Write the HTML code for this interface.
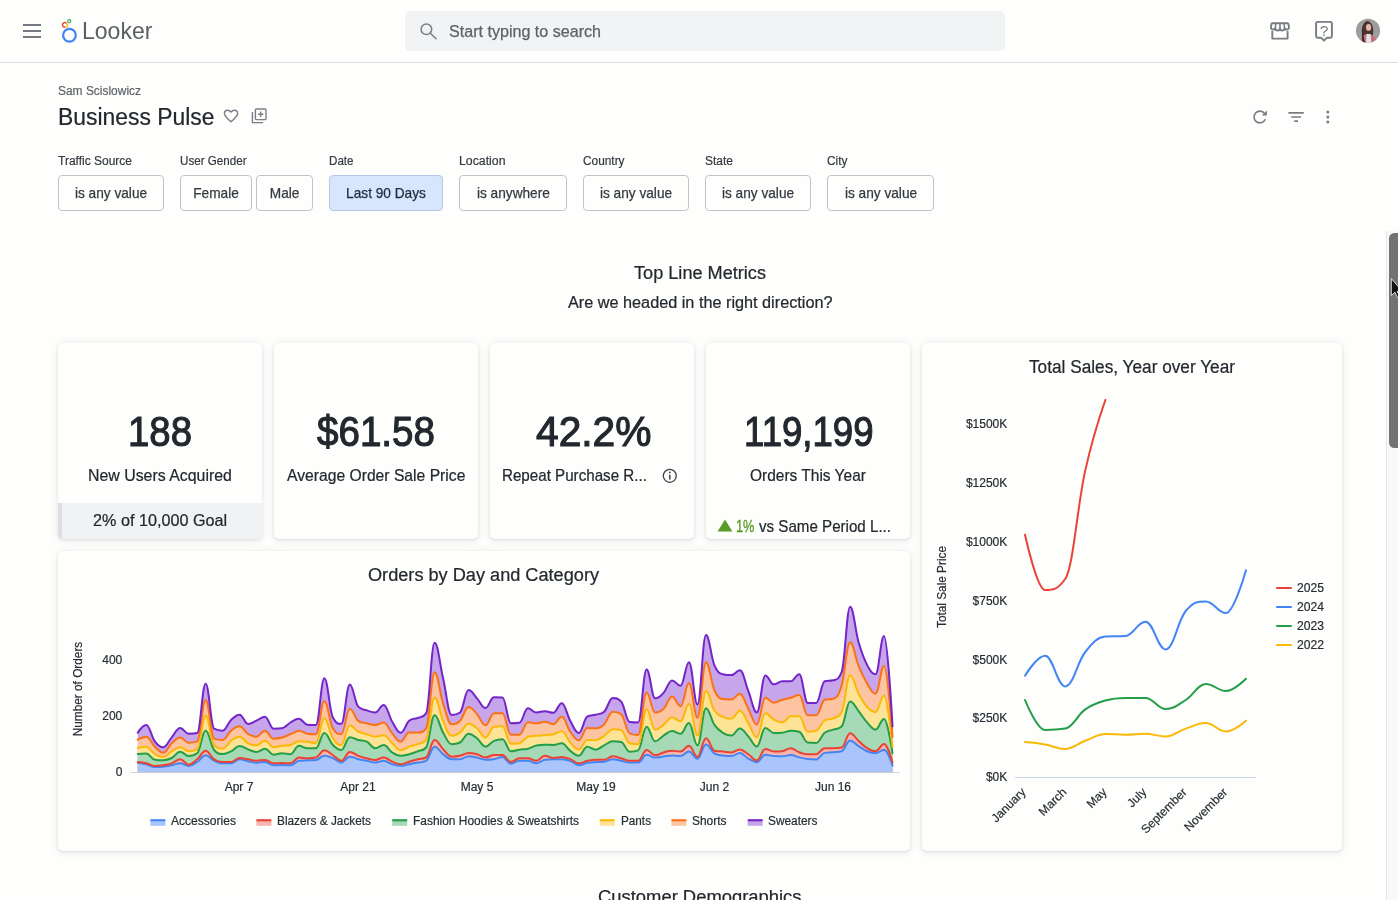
<!DOCTYPE html>
<html lang="en">
<head>
<meta charset="utf-8">
<title>Business Pulse - Looker</title>
<style>
*{box-sizing:border-box;margin:0;padding:0}
html,body{width:1398px;height:900px;overflow:hidden;background:#fefefd;font-family:"Liberation Sans",Arial,sans-serif;color:#262d33}
#page{position:relative;width:1398px;height:900px;overflow:hidden;will-change:transform}
.t{position:absolute;white-space:nowrap;transform-origin:0 50%;display:block}
.abs{position:absolute}
header{position:absolute;left:0;top:0;width:1398px;height:63px;border-bottom:1px solid #dadde1;background:#fefefd}
.search{position:absolute;left:405px;top:11px;width:600px;height:40px;background:#f1f3f4;border-radius:5px}
.fb{position:absolute;top:175px;height:36px;border:1px solid #bfc4ca;border-radius:4px;font-size:14.4px;line-height:34px;text-align:center;color:#343a40;-webkit-text-stroke:0.25px #343a40;background:#fefefd;white-space:nowrap}
.fb span{display:inline-block;transform:scaleX(.95)}
.fb.act{background:#d7e5fd;border-color:#b3c7ea;color:#1f2a3c;-webkit-text-stroke:0.25px #1f2a3c}
.card{position:absolute;background:#fefefd;border-radius:5px;box-shadow:0 1px 3px rgba(60,64,67,.13),0 1px 10px rgba(60,64,67,.10)}
svg{position:absolute;left:0;top:0;overflow:visible}
</style>
</head>
<body>
<div id="page">

<header>
  <!-- hamburger -->
  <div class="abs" style="left:23px;top:24px;width:18px;height:2px;background:#757a80"></div>
  <div class="abs" style="left:23px;top:30px;width:18px;height:2px;background:#757a80"></div>
  <div class="abs" style="left:23px;top:36px;width:18px;height:2px;background:#757a80"></div>
  <div class="search"></div>
</header>

<!-- cards -->
<div class="card" style="left:58px;top:343px;width:204px;height:196px;overflow:hidden">
  <div class="abs" style="left:0;top:160px;width:204px;height:36px;background:#f1f2f4"></div>
  <div class="abs" style="left:0;top:160px;width:4px;height:36px;background:#dcdfe4"></div>
</div>
<div class="card" style="left:274px;top:343px;width:204px;height:196px"></div>
<div class="card" style="left:490px;top:343px;width:204px;height:196px"></div>
<div class="card" style="left:706px;top:343px;width:204px;height:196px"></div>
<div class="card" style="left:58px;top:551px;width:852px;height:300px"></div>
<div class="card" style="left:922px;top:343px;width:420px;height:508px"></div>

<!-- filter buttons -->
<div class="fb" style="left:58px;width:106px"><span>is any value</span></div>
<div class="fb" style="left:180px;width:72px"><span>Female</span></div>
<div class="fb" style="left:256px;width:57px"><span>Male</span></div>
<div class="fb act" style="left:329px;width:114px"><span>Last 90 Days</span></div>
<div class="fb" style="left:459px;width:108px"><span>is anywhere</span></div>
<div class="fb" style="left:583px;width:106px"><span>is any value</span></div>
<div class="fb" style="left:705px;width:106px"><span>is any value</span></div>
<div class="fb" style="left:827px;width:107px"><span>is any value</span></div>

<!-- all icons & charts -->
<svg width="1398" height="900" viewBox="0 0 1398 900">
  <!-- looker logo mark -->
  <g fill="none">
    <circle cx="69.45" cy="35.3" r="6.35" stroke="#4285f4" stroke-width="2.25"/>
    <path d="M66.43 23.22 A2.3 2.3 0 1 0 65.40 27.07" stroke="#ea4335" stroke-width="1.5"/>
    <path d="M66.73 23.02 C67.9 24.6 67.6 26.0 66.80 27.97" stroke="#fbbc04" stroke-width="1.5"/>
    <circle cx="69.3" cy="21.2" r="1.55" stroke="#34a853" stroke-width="1.1"/>
  </g>
  <!-- search icon -->
  <g fill="none" stroke="#7b8086" stroke-width="1.55">
    <circle cx="426.4" cy="29.2" r="5.3"/>
    <path d="M430.4 33.2 L436 38.8" stroke-linecap="round"/>
  </g>
  <!-- marketplace icon -->
  <g fill="none" stroke="#787d83" stroke-width="1.9" stroke-linejoin="round">
    <path d="M1272.3 31 V38.6 H1287.6 V31"/>
    <path d="M1272.6 23.2 H1287.3 Q1288.3 23.2 1288.5 24.2 L1289 27.6 A2.3 2.3 0 0 1 1284.6 28.2 A2.3 2.3 0 0 1 1279.95 28.2 A2.3 2.3 0 0 1 1275.3 28.2 A2.3 2.3 0 0 1 1270.9 27.6 L1271.4 24.2 Q1271.6 23.2 1272.6 23.2 Z"/>
    <path d="M1275.9 23.4 L1275.3 28.2 M1279.95 23.4 V28.2 M1284 23.4 L1284.6 28.2" stroke-width="1.5"/>
  </g>
  <!-- help icon -->
  <g fill="none" stroke="#787d83" stroke-width="1.9" stroke-linejoin="round">
    <path d="M1317.6 21.9 H1330.4 Q1331.9 21.9 1331.9 23.4 V36.3 Q1331.9 37.8 1330.4 37.8 H1326.8 L1324 40.6 L1321.2 37.8 H1317.6 Q1316.1 37.8 1316.1 36.3 V23.4 Q1316.1 21.9 1317.6 21.9 Z"/>
  </g>
  <text x="1324" y="35.7" font-family="Liberation Sans, Arial, sans-serif" font-size="15.5" fill="#787d83" text-anchor="middle">?</text>
  <!-- avatar -->
  <defs><clipPath id="av"><circle cx="1368" cy="30.8" r="12.1"/></clipPath></defs>
  <g clip-path="url(#av)">
    <rect x="1355" y="18" width="26" height="26" fill="#9c9e9d"/>
    <ellipse cx="1367.5" cy="31" rx="5.8" ry="10" fill="#4a3330"/>
    <ellipse cx="1368.6" cy="27.4" rx="2.6" ry="3.4" fill="#e7b9a6"/>
    <path d="M1361 44 C1361 36 1364 34 1368 34 C1372 34 1376 36 1377 44 Z" fill="#c96f73"/>
    <path d="M1366.5 34 L1370.5 34 L1371.5 44 L1366 44 Z" fill="#dfe3ea"/>
    <path d="M1363.5 27 C1363 35 1364 40 1365.4 43 L1362.5 43 C1361.5 37 1361.8 31 1363.5 27 Z" fill="#3b2826"/>
  </g>
  <!-- heart -->
  <path d="M231 121.8 C226.2 117.6 224.4 115.7 224.4 113.4 C224.4 111.5 225.9 110.2 227.6 110.2 C228.9 110.2 230.2 110.9 231 112.1 C231.8 110.9 233.1 110.2 234.4 110.2 C236.1 110.2 237.6 111.5 237.6 113.4 C237.6 115.7 235.8 117.6 231 121.8 Z" fill="none" stroke="#7a7f85" stroke-width="1.4" stroke-linejoin="round"/>
  <!-- add to board -->
  <g fill="none" stroke="#7a7f85" stroke-width="1.4">
    <rect x="255.4" y="109" width="10.6" height="10.6" rx="1"/>
    <path d="M252.4 112 V122.6 H263"/>
    <path d="M260.7 111.6 V117 M258 114.3 H263.4"/>
  </g>
  <!-- refresh -->
  <g fill="none" stroke="#787d83" stroke-width="1.6">
    <path d="M1264.51 113.40 A5.85 5.85 0 1 0 1265.32 119.19"/>
  </g>
  <path d="M1266.9 110.5 V115.5 H1261.9 Z" fill="#787d83"/>
  <!-- filter -->
  <g stroke="#787d83" stroke-width="1.6">
    <path d="M1288.4 112.9 H1303.8 M1291.2 117 H1301 M1294.2 121.1 H1298"/>
  </g>
  <!-- kebab -->
  <g fill="#787d83">
    <circle cx="1327.8" cy="111.9" r="1.5"/><circle cx="1327.8" cy="117" r="1.5"/><circle cx="1327.8" cy="122.1" r="1.5"/>
  </g>
  <!-- info icon -->
  <g fill="none" stroke="#3c4043" stroke-width="1.3">
    <circle cx="669.8" cy="475.8" r="6.5"/>
    <path d="M669.8 474.8 V479.4" stroke-width="1.5"/>
  </g>
  <circle cx="669.8" cy="472.4" r="0.95" fill="#3c4043"/>
  <!-- up triangle -->
  <path d="M725 519.6 L732.4 531.4 H717.6 Z" fill="#5a9a27"/>

  <!-- area chart -->
  <path d="M130 772.5 H900" stroke="#ccd6eb" stroke-width="1"/>
  <path d="M137.80 732.67 C137.80 732.67 142.89 725.07 146.28 725.07 C149.67 725.07 151.37 736.88 154.76 741.33 C158.15 745.79 159.85 747.33 163.24 747.33 C166.63 747.33 168.33 741.20 171.72 737.33 C175.11 733.47 176.81 728.00 180.20 728.00 C183.59 728.00 185.29 733.73 188.68 733.73 C192.07 733.73 193.77 733.73 197.16 733.07 C200.55 732.40 202.25 683.73 205.64 683.73 C209.03 683.73 210.73 726.67 214.12 728.67 C217.51 730.67 219.21 730.67 222.60 730.67 C225.99 730.67 227.69 723.20 231.08 720.00 C234.47 716.80 236.17 714.67 239.56 714.67 C242.95 714.67 244.65 724.00 248.04 724.00 C251.43 724.00 253.13 722.13 256.52 720.67 C259.91 719.20 261.61 716.67 265.00 716.67 C268.39 716.67 270.09 728.67 273.48 728.67 C276.87 728.67 278.57 728.67 281.96 728.33 C285.35 728.00 287.05 724.40 290.44 722.50 C293.83 720.60 295.53 718.83 298.92 718.83 C302.31 718.83 304.01 724.33 307.40 724.67 C310.79 725.00 312.49 725.00 315.88 725.00 C319.27 725.00 320.97 678.33 324.36 678.33 C327.75 678.33 329.45 711.17 332.84 717.50 C336.23 723.83 337.93 723.83 341.32 723.83 C344.71 723.83 346.41 684.50 349.80 684.50 C353.19 684.50 354.89 703.00 358.28 706.67 C361.67 710.33 363.37 709.17 366.76 710.33 C370.15 711.50 371.85 712.50 375.24 712.50 C378.63 712.50 380.33 705.00 383.72 705.00 C387.11 705.00 388.81 716.10 392.20 721.67 C395.59 727.23 397.29 732.83 400.68 732.83 C404.07 732.83 405.77 723.67 409.16 720.83 C412.55 718.00 414.25 719.50 417.64 718.00 C421.03 716.50 422.73 718.00 426.12 713.33 C429.51 708.67 431.21 642.83 434.60 642.83 C437.99 642.83 439.69 663.90 443.08 678.33 C446.47 692.77 448.17 715.00 451.56 715.00 C454.95 715.00 456.65 715.00 460.04 712.50 C463.43 710.00 465.13 690.00 468.52 690.00 C471.91 690.00 473.61 694.73 477.00 698.33 C480.39 701.93 482.09 708.00 485.48 708.00 C488.87 708.00 490.57 697.17 493.96 697.17 C497.35 697.17 499.05 697.17 502.44 697.50 C505.83 697.83 507.53 723.33 510.92 723.33 C514.31 723.33 516.01 723.33 519.40 722.83 C522.79 722.33 524.49 708.33 527.88 708.33 C531.27 708.33 532.97 712.50 536.36 712.50 C539.75 712.50 541.45 711.17 544.84 711.17 C548.23 711.17 549.93 712.83 553.32 712.83 C556.71 712.83 558.41 703.33 561.80 703.33 C565.19 703.33 566.89 714.90 570.28 720.83 C573.67 726.77 575.37 733.00 578.76 733.00 C582.15 733.00 583.85 718.67 587.24 716.67 C590.63 714.67 592.33 715.67 595.72 714.67 C599.11 713.67 600.81 714.67 604.20 711.67 C607.59 708.67 609.29 698.00 612.68 698.00 C616.07 698.00 617.77 698.00 621.16 701.67 C624.55 705.33 626.25 721.50 629.64 722.00 C633.03 722.50 634.73 722.50 638.12 722.50 C641.51 722.50 643.21 669.50 646.60 669.50 C649.99 669.50 651.69 698.33 655.08 698.33 C658.47 698.33 660.17 696.47 663.56 692.89 C666.95 689.31 668.65 680.44 672.04 680.44 C675.43 680.44 677.13 685.78 680.52 685.78 C683.91 685.78 685.61 662.13 689.00 662.13 C692.39 662.13 694.09 704.44 697.48 704.44 C700.87 704.44 702.57 635.11 705.96 635.11 C709.35 635.11 711.05 657.51 714.44 665.33 C717.83 673.16 719.53 673.33 722.92 674.22 C726.31 675.11 728.01 675.11 731.40 675.11 C734.79 675.11 736.49 670.31 739.88 670.31 C743.27 670.31 744.97 682.68 748.36 691.11 C751.75 699.54 753.45 712.44 756.84 712.44 C760.23 712.44 761.93 675.47 765.32 675.47 C768.71 675.47 770.41 684.36 773.80 684.36 C777.19 684.36 778.89 681.33 782.28 681.33 C785.67 681.33 787.37 681.33 790.76 681.33 C794.15 681.33 795.85 674.14 799.24 674.14 C802.63 674.14 804.33 702.92 807.72 702.92 C811.11 702.92 812.81 702.92 816.20 702.92 C819.59 702.92 821.29 682.36 824.68 681.33 C828.07 680.31 829.77 681.33 833.16 680.31 C836.55 679.28 838.25 680.31 841.64 672.08 C845.03 663.86 846.73 606.72 850.12 606.72 C853.51 606.72 855.21 630.64 858.60 642.28 C861.99 653.91 863.69 658.52 867.08 664.89 C870.47 671.26 872.17 674.14 875.56 674.14 C878.95 674.14 880.65 636.11 884.04 636.11 C887.43 636.11 892.52 726.56 892.52 726.56 L892.52 772.3 L137.80 772.3 Z" fill="#c6a5eb"/>
<path d="M137.80 739.73 C137.80 739.73 142.89 736.67 146.28 736.67 C149.67 736.67 151.37 743.47 154.76 746.67 C158.15 749.87 159.85 752.67 163.24 752.67 C166.63 752.67 168.33 746.35 171.72 743.33 C175.11 740.32 176.81 737.60 180.20 737.60 C183.59 737.60 185.29 742.67 188.68 742.67 C192.07 742.67 193.77 742.67 197.16 741.33 C200.55 740.00 202.25 700.00 205.64 700.00 C209.03 700.00 210.73 737.33 214.12 738.67 C217.51 740.00 219.21 740.00 222.60 740.00 C225.99 740.00 227.69 733.41 231.08 730.67 C234.47 727.92 236.17 726.27 239.56 726.27 C242.95 726.27 244.65 731.92 248.04 734.00 C251.43 736.08 253.13 736.67 256.52 736.67 C259.91 736.67 261.61 730.67 265.00 730.67 C268.39 730.67 270.09 738.67 273.48 738.67 C276.87 738.67 278.57 738.40 281.96 737.50 C285.35 736.60 287.05 735.50 290.44 734.17 C293.83 732.83 295.53 730.83 298.92 730.83 C302.31 730.83 304.01 733.17 307.40 733.67 C310.79 734.17 312.49 734.17 315.88 734.17 C319.27 734.17 320.97 701.33 324.36 701.33 C327.75 701.33 329.45 722.50 332.84 728.33 C336.23 734.17 337.93 734.17 341.32 734.17 C344.71 734.17 346.41 708.67 349.80 708.67 C353.19 708.67 354.89 718.33 358.28 720.83 C361.67 723.33 363.37 722.50 366.76 723.33 C370.15 724.17 371.85 725.00 375.24 725.00 C378.63 725.00 380.33 722.50 383.72 722.50 C387.11 722.50 388.81 729.50 392.20 733.33 C395.59 737.17 397.29 741.67 400.68 741.67 C404.07 741.67 405.77 732.50 409.16 732.50 C412.55 732.50 414.25 732.50 417.64 732.50 C421.03 732.50 422.73 732.50 426.12 728.33 C429.51 724.17 431.21 672.50 434.60 672.50 C437.99 672.50 439.69 693.00 443.08 703.33 C446.47 713.67 448.17 724.17 451.56 724.17 C454.95 724.17 456.65 724.17 460.04 720.83 C463.43 717.50 465.13 707.00 468.52 707.00 C471.91 707.00 473.61 710.50 477.00 714.17 C480.39 717.83 482.09 725.33 485.48 725.33 C488.87 725.33 490.57 713.33 493.96 713.33 C497.35 713.33 499.05 713.33 502.44 713.33 C505.83 713.33 507.53 734.67 510.92 734.67 C514.31 734.67 516.01 734.67 519.40 734.67 C522.79 734.67 524.49 722.17 527.88 722.17 C531.27 722.17 532.97 723.33 536.36 723.33 C539.75 723.33 541.45 721.67 544.84 721.67 C548.23 721.67 549.93 724.17 553.32 724.17 C556.71 724.17 558.41 716.67 561.80 716.67 C565.19 716.67 566.89 726.93 570.28 731.67 C573.67 736.40 575.37 740.33 578.76 740.33 C582.15 740.33 583.85 728.00 587.24 728.00 C590.63 728.00 592.33 728.33 595.72 728.33 C599.11 728.33 600.81 727.50 604.20 724.17 C607.59 720.83 609.29 711.67 612.68 711.67 C616.07 711.67 617.77 711.67 621.16 714.17 C624.55 716.67 626.25 731.67 629.64 733.33 C633.03 735.00 634.73 735.00 638.12 735.00 C641.51 735.00 643.21 692.50 646.60 692.50 C649.99 692.50 651.69 712.50 655.08 712.50 C658.47 712.50 660.17 712.10 663.56 708.89 C666.95 705.68 668.65 696.44 672.04 696.44 C675.43 696.44 677.13 706.22 680.52 706.22 C683.91 706.22 685.61 683.11 689.00 683.11 C692.39 683.11 694.09 717.78 697.48 717.78 C700.87 717.78 702.57 662.13 705.96 662.13 C709.35 662.13 711.05 682.83 714.44 690.22 C717.83 697.62 719.53 698.76 722.92 699.11 C726.31 699.47 728.01 699.47 731.40 699.47 C734.79 699.47 736.49 693.78 739.88 693.78 C743.27 693.78 744.97 702.74 748.36 708.89 C751.75 715.04 753.45 724.53 756.84 724.53 C760.23 724.53 761.93 697.69 765.32 697.69 C768.71 697.69 770.41 702.67 773.80 702.67 C777.19 702.67 778.89 700.81 782.28 699.83 C785.67 698.86 787.37 698.72 790.76 697.78 C794.15 696.83 795.85 695.11 799.24 695.11 C802.63 695.11 804.33 715.25 807.72 715.25 C811.11 715.25 812.81 715.25 816.20 715.25 C819.59 715.25 821.29 700.86 824.68 699.83 C828.07 698.81 829.77 699.83 833.16 698.81 C836.55 697.78 838.25 696.75 841.64 685.44 C845.03 674.14 846.73 642.28 850.12 642.28 C853.51 642.28 855.21 657.69 858.60 665.92 C861.99 674.14 863.69 677.84 867.08 683.39 C870.47 688.94 872.17 693.67 875.56 693.67 C878.95 693.67 880.65 665.92 884.04 665.92 C887.43 665.92 892.52 736.83 892.52 736.83 L892.52 772.3 L137.80 772.3 Z" fill="#fdc4a2"/>
<path d="M137.80 748.00 C137.80 748.00 142.89 746.67 146.28 746.67 C149.67 746.67 151.37 751.92 154.76 754.00 C158.15 756.08 159.85 757.07 163.24 757.07 C166.63 757.07 168.33 753.28 171.72 751.33 C175.11 749.39 176.81 747.33 180.20 747.33 C183.59 747.33 185.29 751.33 188.68 751.33 C192.07 751.33 193.77 751.33 197.16 749.07 C200.55 746.80 202.25 715.73 205.64 715.73 C209.03 715.73 210.73 742.00 214.12 745.33 C217.51 748.67 219.21 748.67 222.60 748.67 C225.99 748.67 227.69 743.07 231.08 740.67 C234.47 738.27 236.17 736.67 239.56 736.67 C242.95 736.67 244.65 741.60 248.04 743.33 C251.43 745.07 253.13 745.33 256.52 745.33 C259.91 745.33 261.61 740.67 265.00 740.67 C268.39 740.67 270.09 747.33 273.48 747.33 C276.87 747.33 278.57 746.30 281.96 745.83 C285.35 745.37 287.05 745.83 290.44 745.00 C293.83 744.17 295.53 741.33 298.92 741.33 C302.31 741.33 304.01 741.33 307.40 741.67 C310.79 742.00 312.49 743.33 315.88 743.33 C319.27 743.33 320.97 718.33 324.36 718.33 C327.75 718.33 329.45 733.00 332.84 738.33 C336.23 743.67 337.93 745.00 341.32 745.00 C344.71 745.00 346.41 725.50 349.80 725.50 C353.19 725.50 354.89 729.93 358.28 731.67 C361.67 733.40 363.37 733.17 366.76 734.17 C370.15 735.17 371.85 736.67 375.24 736.67 C378.63 736.67 380.33 735.33 383.72 735.33 C387.11 735.33 388.81 740.33 392.20 743.33 C395.59 746.33 397.29 750.33 400.68 750.33 C404.07 750.33 405.77 747.90 409.16 746.67 C412.55 745.43 414.25 745.50 417.64 744.17 C421.03 742.83 422.73 744.17 426.12 740.00 C429.51 735.83 431.21 697.50 434.60 697.50 C437.99 697.50 439.69 713.17 443.08 720.83 C446.47 728.50 448.17 735.83 451.56 735.83 C454.95 735.83 456.65 734.90 460.04 732.50 C463.43 730.10 465.13 723.83 468.52 723.83 C471.91 723.83 473.61 725.60 477.00 728.33 C480.39 731.07 482.09 737.50 485.48 737.50 C488.87 737.50 490.57 727.00 493.96 726.67 C497.35 726.33 499.05 726.33 502.44 726.33 C505.83 726.33 507.53 743.83 510.92 743.83 C514.31 743.83 516.01 743.83 519.40 743.33 C522.79 742.83 524.49 737.50 527.88 736.67 C531.27 735.83 532.97 736.17 536.36 735.83 C539.75 735.50 541.45 735.33 544.84 735.00 C548.23 734.67 549.93 734.90 553.32 734.17 C556.71 733.43 558.41 731.33 561.80 731.33 C565.19 731.33 566.89 738.83 570.28 742.50 C573.67 746.17 575.37 749.67 578.76 749.67 C582.15 749.67 583.85 740.00 587.24 740.00 C590.63 740.00 592.33 740.00 595.72 740.00 C599.11 740.00 600.81 738.00 604.20 735.83 C607.59 733.67 609.29 729.17 612.68 729.17 C616.07 729.17 617.77 729.17 621.16 730.00 C624.55 730.83 626.25 742.50 629.64 743.33 C633.03 744.17 634.73 744.17 638.12 744.17 C641.51 744.17 643.21 709.17 646.60 709.17 C649.99 709.17 651.69 729.67 655.08 729.67 C658.47 729.67 660.17 727.34 663.56 724.89 C666.95 722.44 668.65 717.42 672.04 717.42 C675.43 717.42 677.13 721.33 680.52 721.33 C683.91 721.33 685.61 703.91 689.00 703.91 C692.39 703.91 694.09 735.56 697.48 735.56 C700.87 735.56 702.57 691.11 705.96 691.11 C709.35 691.11 711.05 705.51 714.44 710.67 C717.83 715.82 719.53 715.29 722.92 716.89 C726.31 718.49 728.01 718.67 731.40 718.67 C734.79 718.67 736.49 710.67 739.88 710.67 C743.27 710.67 744.97 717.78 748.36 723.11 C751.75 728.44 753.45 737.33 756.84 737.33 C760.23 737.33 761.93 713.33 765.32 713.33 C768.71 713.33 770.41 717.73 773.80 719.56 C777.19 721.38 778.89 722.44 782.28 722.44 C785.67 722.44 787.37 716.28 790.76 716.28 C794.15 716.28 795.85 716.28 799.24 716.28 C802.63 716.28 804.33 731.69 807.72 731.69 C811.11 731.69 812.81 731.69 816.20 730.67 C819.59 729.64 821.29 722.44 824.68 720.39 C828.07 718.33 829.77 719.98 833.16 718.33 C836.55 716.69 838.25 718.33 841.64 712.17 C845.03 706.00 846.73 675.17 850.12 675.17 C853.51 675.17 855.21 687.29 858.60 693.67 C861.99 700.04 863.69 703.33 867.08 707.03 C870.47 710.73 872.17 712.17 875.56 712.17 C878.95 712.17 880.65 695.72 884.04 695.72 C887.43 695.72 892.52 747.11 892.52 747.11 L892.52 772.3 L137.80 772.3 Z" fill="#fde396"/>
<path d="M137.80 754.00 C137.80 754.00 142.89 753.60 146.28 753.60 C149.67 753.60 151.37 759.20 154.76 759.73 C158.15 760.27 159.85 760.27 163.24 760.27 C166.63 760.27 168.33 759.71 171.72 758.00 C175.11 756.29 176.81 751.73 180.20 751.73 C183.59 751.73 185.29 756.00 188.68 756.00 C192.07 756.00 193.77 756.00 197.16 753.33 C200.55 750.67 202.25 730.40 205.64 730.40 C209.03 730.40 210.73 746.00 214.12 750.00 C217.51 754.00 219.21 754.00 222.60 754.00 C225.99 754.00 227.69 752.93 231.08 751.33 C234.47 749.73 236.17 746.00 239.56 746.00 C242.95 746.00 244.65 748.13 248.04 749.33 C251.43 750.53 253.13 752.00 256.52 752.00 C259.91 752.00 261.61 748.67 265.00 748.67 C268.39 748.67 270.09 754.67 273.48 754.67 C276.87 754.67 278.57 753.33 281.96 753.33 C285.35 753.33 287.05 754.17 290.44 754.17 C293.83 754.17 295.53 745.83 298.92 745.83 C302.31 745.83 304.01 748.33 307.40 748.33 C310.79 748.33 312.49 748.33 315.88 748.33 C319.27 748.33 320.97 733.00 324.36 733.00 C327.75 733.00 329.45 741.60 332.84 745.00 C336.23 748.40 337.93 750.00 341.32 750.00 C344.71 750.00 346.41 737.17 349.80 737.17 C353.19 737.17 354.89 739.10 358.28 740.00 C361.67 740.90 363.37 740.00 366.76 741.67 C370.15 743.33 371.85 748.33 375.24 748.33 C378.63 748.33 380.33 745.00 383.72 745.00 C387.11 745.00 388.81 750.33 392.20 752.50 C395.59 754.67 397.29 755.83 400.68 755.83 C404.07 755.83 405.77 755.07 409.16 754.17 C412.55 753.27 414.25 752.67 417.64 751.33 C421.03 750.00 422.73 751.33 426.12 747.50 C429.51 743.67 431.21 715.33 434.60 715.33 C437.99 715.33 439.69 726.73 443.08 732.50 C446.47 738.27 448.17 744.17 451.56 744.17 C454.95 744.17 456.65 744.17 460.04 742.50 C463.43 740.83 465.13 733.67 468.52 733.67 C471.91 733.67 473.61 735.73 477.00 738.33 C480.39 740.93 482.09 746.67 485.48 746.67 C488.87 746.67 490.57 742.33 493.96 740.83 C497.35 739.33 499.05 739.17 502.44 739.17 C505.83 739.17 507.53 751.33 510.92 751.33 C514.31 751.33 516.01 750.20 519.40 749.67 C522.79 749.13 524.49 749.50 527.88 748.67 C531.27 747.83 532.97 746.30 536.36 745.50 C539.75 744.70 541.45 744.67 544.84 744.67 C548.23 744.67 549.93 745.00 553.32 745.00 C556.71 745.00 558.41 743.33 561.80 743.33 C565.19 743.33 566.89 748.33 570.28 750.83 C573.67 753.33 575.37 755.83 578.76 755.83 C582.15 755.83 583.85 746.67 587.24 746.67 C590.63 746.67 592.33 749.67 595.72 749.67 C599.11 749.67 600.81 747.00 604.20 745.33 C607.59 743.67 609.29 741.33 612.68 741.33 C616.07 741.33 617.77 741.33 621.16 742.00 C624.55 742.67 626.25 751.67 629.64 751.67 C633.03 751.67 634.73 751.67 638.12 750.33 C641.51 749.00 643.21 726.67 646.60 726.67 C649.99 726.67 651.69 741.33 655.08 741.33 C658.47 741.33 660.17 737.60 663.56 735.56 C666.95 733.51 668.65 731.11 672.04 731.11 C675.43 731.11 677.13 733.78 680.52 733.78 C683.91 733.78 685.61 723.11 689.00 723.11 C692.39 723.11 694.09 745.33 697.48 745.33 C700.87 745.33 702.57 708.36 705.96 708.36 C709.35 708.36 711.05 719.98 714.44 724.89 C717.83 729.80 719.53 730.76 722.92 732.89 C726.31 735.02 728.01 735.56 731.40 735.56 C734.79 735.56 736.49 728.44 739.88 728.44 C743.27 728.44 744.97 732.82 748.36 736.44 C751.75 740.07 753.45 746.58 756.84 746.58 C760.23 746.58 761.93 727.91 765.32 727.91 C768.71 727.91 770.41 732.89 773.80 732.89 C777.19 732.89 778.89 732.89 782.28 732.72 C785.67 732.56 787.37 730.67 790.76 730.67 C794.15 730.67 795.85 730.67 799.24 731.69 C802.63 732.72 804.33 742.18 807.72 742.59 C811.11 743.00 812.81 743.00 816.20 743.00 C819.59 743.00 821.29 735.39 824.68 732.72 C828.07 730.05 829.77 730.87 833.16 729.64 C836.55 728.41 838.25 729.64 841.64 726.56 C845.03 723.47 846.73 701.48 850.12 701.48 C853.51 701.48 855.21 706.95 858.60 711.14 C861.99 715.33 863.69 718.74 867.08 722.44 C870.47 726.14 872.17 729.64 875.56 729.64 C878.95 729.64 880.65 718.95 884.04 718.95 C887.43 718.95 892.52 753.28 892.52 753.28 L892.52 772.3 L137.80 772.3 Z" fill="#a6d9b5"/>
<path d="M137.80 762.00 C137.80 762.00 142.89 762.53 146.28 763.33 C149.67 764.13 151.37 766.00 154.76 766.00 C158.15 766.00 159.85 765.87 163.24 765.33 C166.63 764.80 168.33 764.53 171.72 763.33 C175.11 762.13 176.81 759.33 180.20 759.33 C183.59 759.33 185.29 764.67 188.68 764.67 C192.07 764.67 193.77 762.13 197.16 759.33 C200.55 756.53 202.25 750.67 205.64 750.67 C209.03 750.67 210.73 757.07 214.12 759.33 C217.51 761.60 219.21 762.00 222.60 762.00 C225.99 762.00 227.69 762.00 231.08 762.00 C234.47 762.00 236.17 758.00 239.56 758.00 C242.95 758.00 244.65 758.80 248.04 759.33 C251.43 759.87 253.13 760.67 256.52 760.67 C259.91 760.67 261.61 760.00 265.00 760.00 C268.39 760.00 270.09 763.33 273.48 763.33 C276.87 763.33 278.57 763.00 281.96 763.00 C285.35 763.00 287.05 763.33 290.44 763.33 C293.83 763.33 295.53 757.50 298.92 757.50 C302.31 757.50 304.01 758.33 307.40 758.33 C310.79 758.33 312.49 758.33 315.88 757.50 C319.27 756.67 320.97 750.33 324.36 750.33 C327.75 750.33 329.45 752.90 332.84 755.00 C336.23 757.10 337.93 760.83 341.32 760.83 C344.71 760.83 346.41 752.00 349.80 752.00 C353.19 752.00 354.89 754.57 358.28 755.83 C361.67 757.10 363.37 757.50 366.76 758.33 C370.15 759.17 371.85 760.00 375.24 760.00 C378.63 760.00 380.33 757.50 383.72 757.50 C387.11 757.50 388.81 760.33 392.20 761.67 C395.59 763.00 397.29 764.17 400.68 764.17 C404.07 764.17 405.77 762.67 409.16 761.67 C412.55 760.67 414.25 760.00 417.64 759.17 C421.03 758.33 422.73 759.17 426.12 757.50 C429.51 755.83 431.21 740.00 434.60 740.00 C437.99 740.00 439.69 745.83 443.08 749.17 C446.47 752.50 448.17 756.67 451.56 756.67 C454.95 756.67 456.65 756.57 460.04 755.83 C463.43 755.10 465.13 753.00 468.52 753.00 C471.91 753.00 473.61 753.27 477.00 754.17 C480.39 755.07 482.09 757.50 485.48 757.50 C488.87 757.50 490.57 755.00 493.96 755.00 C497.35 755.00 499.05 755.00 502.44 755.00 C505.83 755.00 507.53 762.00 510.92 762.00 C514.31 762.00 516.01 758.33 519.40 758.33 C522.79 758.33 524.49 758.33 527.88 758.33 C531.27 758.33 532.97 760.83 536.36 760.83 C539.75 760.83 541.45 755.83 544.84 755.83 C548.23 755.83 549.93 758.00 553.32 758.00 C556.71 758.00 558.41 757.00 561.80 757.00 C565.19 757.00 566.89 757.90 570.28 759.17 C573.67 760.43 575.37 763.33 578.76 763.33 C582.15 763.33 583.85 761.57 587.24 760.83 C590.63 760.10 592.33 759.67 595.72 759.67 C599.11 759.67 600.81 759.67 604.20 759.67 C607.59 759.67 609.29 756.33 612.68 756.33 C616.07 756.33 617.77 757.43 621.16 758.33 C624.55 759.23 626.25 760.83 629.64 760.83 C633.03 760.83 634.73 760.83 638.12 760.83 C641.51 760.83 643.21 750.00 646.60 750.00 C649.99 750.00 651.69 755.33 655.08 755.33 C658.47 755.33 660.17 753.38 663.56 752.44 C666.95 751.51 668.65 750.67 672.04 750.67 C675.43 750.67 677.13 751.56 680.52 751.56 C683.91 751.56 685.61 745.87 689.00 745.87 C692.39 745.87 694.09 756.89 697.48 756.89 C700.87 756.89 702.57 738.22 705.96 738.22 C709.35 738.22 711.05 749.78 714.44 750.67 C717.83 751.56 719.53 751.20 722.92 751.56 C726.31 751.91 728.01 752.44 731.40 752.44 C734.79 752.44 736.49 749.42 739.88 749.42 C743.27 749.42 744.97 752.02 748.36 754.22 C751.75 756.43 753.45 760.44 756.84 760.44 C760.23 760.44 761.93 748.89 765.32 748.89 C768.71 748.89 770.41 751.56 773.80 751.56 C777.19 751.56 778.89 751.56 782.28 751.22 C785.67 750.89 787.37 748.14 790.76 748.14 C794.15 748.14 795.85 751.02 799.24 752.25 C802.63 753.48 804.33 754.31 807.72 754.31 C811.11 754.31 812.81 754.31 816.20 754.31 C819.59 754.31 821.29 748.14 824.68 748.14 C828.07 748.14 829.77 748.14 833.16 748.14 C836.55 748.14 838.25 748.14 841.64 747.52 C845.03 746.91 846.73 733.13 850.12 733.13 C853.51 733.13 855.21 737.94 858.60 740.94 C861.99 743.95 863.69 746.08 867.08 748.14 C870.47 750.19 872.17 751.22 875.56 751.22 C878.95 751.22 880.65 744.03 884.04 744.03 C887.43 744.03 892.52 762.53 892.52 762.53 L892.52 772.3 L137.80 772.3 Z" fill="#f7b5ad"/>
<path d="M137.80 762.67 C137.80 762.67 142.89 763.39 146.28 764.27 C149.67 765.15 151.37 767.07 154.76 767.07 C158.15 767.07 159.85 767.01 163.24 766.67 C166.63 766.32 168.33 766.00 171.72 765.33 C175.11 764.67 176.81 763.33 180.20 763.33 C183.59 763.33 185.29 766.00 188.68 766.00 C192.07 766.00 193.77 764.13 197.16 762.00 C200.55 759.87 202.25 755.33 205.64 755.33 C209.03 755.33 210.73 759.07 214.12 760.67 C217.51 762.27 219.21 763.33 222.60 763.33 C225.99 763.33 227.69 763.33 231.08 763.33 C234.47 763.33 236.17 759.33 239.56 759.33 C242.95 759.33 244.65 760.67 248.04 761.33 C251.43 762.00 253.13 762.67 256.52 762.67 C259.91 762.67 261.61 762.00 265.00 762.00 C268.39 762.00 270.09 765.33 273.48 765.33 C276.87 765.33 278.57 765.00 281.96 765.00 C285.35 765.00 287.05 765.33 290.44 765.33 C293.83 765.33 295.53 761.33 298.92 760.83 C302.31 760.33 304.01 760.50 307.40 760.33 C310.79 760.17 312.49 760.33 315.88 760.00 C319.27 759.67 320.97 755.83 324.36 755.83 C327.75 755.83 329.45 756.67 332.84 758.00 C336.23 759.33 337.93 762.50 341.32 762.50 C344.71 762.50 346.41 756.67 349.80 756.67 C353.19 756.67 354.89 758.33 358.28 759.17 C361.67 760.00 363.37 760.17 366.76 760.83 C370.15 761.50 371.85 762.50 375.24 762.50 C378.63 762.50 380.33 760.83 383.72 760.83 C387.11 760.83 388.81 763.17 392.20 764.17 C395.59 765.17 397.29 765.83 400.68 765.83 C404.07 765.83 405.77 764.83 409.16 764.17 C412.55 763.50 414.25 763.17 417.64 762.50 C421.03 761.83 422.73 762.50 426.12 760.83 C429.51 759.17 431.21 746.67 434.60 746.67 C437.99 746.67 439.69 751.67 443.08 754.17 C446.47 756.67 448.17 759.17 451.56 759.17 C454.95 759.17 456.65 759.17 460.04 759.17 C463.43 759.17 465.13 756.33 468.52 756.33 C471.91 756.33 473.61 756.83 477.00 757.50 C480.39 758.17 482.09 759.67 485.48 759.67 C488.87 759.67 490.57 759.67 493.96 759.17 C497.35 758.67 499.05 757.00 502.44 757.00 C505.83 757.00 507.53 763.67 510.92 763.67 C514.31 763.67 516.01 760.83 519.40 760.83 C522.79 760.83 524.49 760.83 527.88 760.83 C531.27 760.83 532.97 763.33 536.36 763.33 C539.75 763.33 541.45 760.17 544.84 759.67 C548.23 759.17 549.93 759.17 553.32 759.17 C556.71 759.17 558.41 759.17 561.80 759.17 C565.19 759.17 566.89 759.60 570.28 760.83 C573.67 762.07 575.37 765.33 578.76 765.33 C582.15 765.33 583.85 763.50 587.24 762.83 C590.63 762.17 592.33 762.23 595.72 762.00 C599.11 761.77 600.81 762.00 604.20 761.67 C607.59 761.33 609.29 759.17 612.68 759.17 C616.07 759.17 617.77 760.17 621.16 760.83 C624.55 761.50 626.25 762.50 629.64 762.50 C633.03 762.50 634.73 762.50 638.12 762.50 C641.51 762.50 643.21 754.67 646.60 754.67 C649.99 754.67 651.69 757.50 655.08 757.50 C658.47 757.50 660.17 756.94 663.56 756.53 C666.95 756.13 668.65 755.47 672.04 755.47 C675.43 755.47 677.13 756.00 680.52 756.00 C683.91 756.00 685.61 751.56 689.00 751.56 C692.39 751.56 694.09 758.67 697.48 758.67 C700.87 758.67 702.57 744.44 705.96 744.44 C709.35 744.44 711.05 751.20 714.44 753.33 C717.83 755.47 719.53 754.93 722.92 755.47 C726.31 756.00 728.01 756.00 731.40 756.00 C734.79 756.00 736.49 752.98 739.88 752.98 C743.27 752.98 744.97 756.82 748.36 758.67 C751.75 760.52 753.45 762.22 756.84 762.22 C760.23 762.22 761.93 754.76 765.32 754.76 C768.71 754.76 770.41 755.68 773.80 756.00 C777.19 756.32 778.89 756.36 782.28 756.36 C785.67 756.36 787.37 754.92 790.76 754.92 C794.15 754.92 795.85 756.57 799.24 757.39 C802.63 758.21 804.33 758.62 807.72 759.03 C811.11 759.44 812.81 759.44 816.20 759.44 C819.59 759.44 821.29 753.48 824.68 752.87 C828.07 752.25 829.77 752.58 833.16 752.25 C836.55 751.92 838.25 752.25 841.64 751.22 C845.03 750.19 846.73 740.53 850.12 740.53 C853.51 740.53 855.21 743.95 858.60 746.08 C861.99 748.22 863.69 749.78 867.08 751.22 C870.47 752.66 872.17 753.28 875.56 753.28 C878.95 753.28 880.65 749.78 884.04 749.78 C887.43 749.78 892.52 765.61 892.52 765.61 L892.52 772.3 L137.80 772.3 Z" fill="#aac5fb"/>
<path d="M137.80 762.67 C137.80 762.67 142.89 763.39 146.28 764.27 C149.67 765.15 151.37 767.07 154.76 767.07 C158.15 767.07 159.85 767.01 163.24 766.67 C166.63 766.32 168.33 766.00 171.72 765.33 C175.11 764.67 176.81 763.33 180.20 763.33 C183.59 763.33 185.29 766.00 188.68 766.00 C192.07 766.00 193.77 764.13 197.16 762.00 C200.55 759.87 202.25 755.33 205.64 755.33 C209.03 755.33 210.73 759.07 214.12 760.67 C217.51 762.27 219.21 763.33 222.60 763.33 C225.99 763.33 227.69 763.33 231.08 763.33 C234.47 763.33 236.17 759.33 239.56 759.33 C242.95 759.33 244.65 760.67 248.04 761.33 C251.43 762.00 253.13 762.67 256.52 762.67 C259.91 762.67 261.61 762.00 265.00 762.00 C268.39 762.00 270.09 765.33 273.48 765.33 C276.87 765.33 278.57 765.00 281.96 765.00 C285.35 765.00 287.05 765.33 290.44 765.33 C293.83 765.33 295.53 761.33 298.92 760.83 C302.31 760.33 304.01 760.50 307.40 760.33 C310.79 760.17 312.49 760.33 315.88 760.00 C319.27 759.67 320.97 755.83 324.36 755.83 C327.75 755.83 329.45 756.67 332.84 758.00 C336.23 759.33 337.93 762.50 341.32 762.50 C344.71 762.50 346.41 756.67 349.80 756.67 C353.19 756.67 354.89 758.33 358.28 759.17 C361.67 760.00 363.37 760.17 366.76 760.83 C370.15 761.50 371.85 762.50 375.24 762.50 C378.63 762.50 380.33 760.83 383.72 760.83 C387.11 760.83 388.81 763.17 392.20 764.17 C395.59 765.17 397.29 765.83 400.68 765.83 C404.07 765.83 405.77 764.83 409.16 764.17 C412.55 763.50 414.25 763.17 417.64 762.50 C421.03 761.83 422.73 762.50 426.12 760.83 C429.51 759.17 431.21 746.67 434.60 746.67 C437.99 746.67 439.69 751.67 443.08 754.17 C446.47 756.67 448.17 759.17 451.56 759.17 C454.95 759.17 456.65 759.17 460.04 759.17 C463.43 759.17 465.13 756.33 468.52 756.33 C471.91 756.33 473.61 756.83 477.00 757.50 C480.39 758.17 482.09 759.67 485.48 759.67 C488.87 759.67 490.57 759.67 493.96 759.17 C497.35 758.67 499.05 757.00 502.44 757.00 C505.83 757.00 507.53 763.67 510.92 763.67 C514.31 763.67 516.01 760.83 519.40 760.83 C522.79 760.83 524.49 760.83 527.88 760.83 C531.27 760.83 532.97 763.33 536.36 763.33 C539.75 763.33 541.45 760.17 544.84 759.67 C548.23 759.17 549.93 759.17 553.32 759.17 C556.71 759.17 558.41 759.17 561.80 759.17 C565.19 759.17 566.89 759.60 570.28 760.83 C573.67 762.07 575.37 765.33 578.76 765.33 C582.15 765.33 583.85 763.50 587.24 762.83 C590.63 762.17 592.33 762.23 595.72 762.00 C599.11 761.77 600.81 762.00 604.20 761.67 C607.59 761.33 609.29 759.17 612.68 759.17 C616.07 759.17 617.77 760.17 621.16 760.83 C624.55 761.50 626.25 762.50 629.64 762.50 C633.03 762.50 634.73 762.50 638.12 762.50 C641.51 762.50 643.21 754.67 646.60 754.67 C649.99 754.67 651.69 757.50 655.08 757.50 C658.47 757.50 660.17 756.94 663.56 756.53 C666.95 756.13 668.65 755.47 672.04 755.47 C675.43 755.47 677.13 756.00 680.52 756.00 C683.91 756.00 685.61 751.56 689.00 751.56 C692.39 751.56 694.09 758.67 697.48 758.67 C700.87 758.67 702.57 744.44 705.96 744.44 C709.35 744.44 711.05 751.20 714.44 753.33 C717.83 755.47 719.53 754.93 722.92 755.47 C726.31 756.00 728.01 756.00 731.40 756.00 C734.79 756.00 736.49 752.98 739.88 752.98 C743.27 752.98 744.97 756.82 748.36 758.67 C751.75 760.52 753.45 762.22 756.84 762.22 C760.23 762.22 761.93 754.76 765.32 754.76 C768.71 754.76 770.41 755.68 773.80 756.00 C777.19 756.32 778.89 756.36 782.28 756.36 C785.67 756.36 787.37 754.92 790.76 754.92 C794.15 754.92 795.85 756.57 799.24 757.39 C802.63 758.21 804.33 758.62 807.72 759.03 C811.11 759.44 812.81 759.44 816.20 759.44 C819.59 759.44 821.29 753.48 824.68 752.87 C828.07 752.25 829.77 752.58 833.16 752.25 C836.55 751.92 838.25 752.25 841.64 751.22 C845.03 750.19 846.73 740.53 850.12 740.53 C853.51 740.53 855.21 743.95 858.60 746.08 C861.99 748.22 863.69 749.78 867.08 751.22 C870.47 752.66 872.17 753.28 875.56 753.28 C878.95 753.28 880.65 749.78 884.04 749.78 C887.43 749.78 892.52 765.61 892.52 765.61" fill="none" stroke="#4285f4" stroke-width="2" stroke-linejoin="round" stroke-linecap="round"/>
<path d="M137.80 762.00 C137.80 762.00 142.89 762.53 146.28 763.33 C149.67 764.13 151.37 766.00 154.76 766.00 C158.15 766.00 159.85 765.87 163.24 765.33 C166.63 764.80 168.33 764.53 171.72 763.33 C175.11 762.13 176.81 759.33 180.20 759.33 C183.59 759.33 185.29 764.67 188.68 764.67 C192.07 764.67 193.77 762.13 197.16 759.33 C200.55 756.53 202.25 750.67 205.64 750.67 C209.03 750.67 210.73 757.07 214.12 759.33 C217.51 761.60 219.21 762.00 222.60 762.00 C225.99 762.00 227.69 762.00 231.08 762.00 C234.47 762.00 236.17 758.00 239.56 758.00 C242.95 758.00 244.65 758.80 248.04 759.33 C251.43 759.87 253.13 760.67 256.52 760.67 C259.91 760.67 261.61 760.00 265.00 760.00 C268.39 760.00 270.09 763.33 273.48 763.33 C276.87 763.33 278.57 763.00 281.96 763.00 C285.35 763.00 287.05 763.33 290.44 763.33 C293.83 763.33 295.53 757.50 298.92 757.50 C302.31 757.50 304.01 758.33 307.40 758.33 C310.79 758.33 312.49 758.33 315.88 757.50 C319.27 756.67 320.97 750.33 324.36 750.33 C327.75 750.33 329.45 752.90 332.84 755.00 C336.23 757.10 337.93 760.83 341.32 760.83 C344.71 760.83 346.41 752.00 349.80 752.00 C353.19 752.00 354.89 754.57 358.28 755.83 C361.67 757.10 363.37 757.50 366.76 758.33 C370.15 759.17 371.85 760.00 375.24 760.00 C378.63 760.00 380.33 757.50 383.72 757.50 C387.11 757.50 388.81 760.33 392.20 761.67 C395.59 763.00 397.29 764.17 400.68 764.17 C404.07 764.17 405.77 762.67 409.16 761.67 C412.55 760.67 414.25 760.00 417.64 759.17 C421.03 758.33 422.73 759.17 426.12 757.50 C429.51 755.83 431.21 740.00 434.60 740.00 C437.99 740.00 439.69 745.83 443.08 749.17 C446.47 752.50 448.17 756.67 451.56 756.67 C454.95 756.67 456.65 756.57 460.04 755.83 C463.43 755.10 465.13 753.00 468.52 753.00 C471.91 753.00 473.61 753.27 477.00 754.17 C480.39 755.07 482.09 757.50 485.48 757.50 C488.87 757.50 490.57 755.00 493.96 755.00 C497.35 755.00 499.05 755.00 502.44 755.00 C505.83 755.00 507.53 762.00 510.92 762.00 C514.31 762.00 516.01 758.33 519.40 758.33 C522.79 758.33 524.49 758.33 527.88 758.33 C531.27 758.33 532.97 760.83 536.36 760.83 C539.75 760.83 541.45 755.83 544.84 755.83 C548.23 755.83 549.93 758.00 553.32 758.00 C556.71 758.00 558.41 757.00 561.80 757.00 C565.19 757.00 566.89 757.90 570.28 759.17 C573.67 760.43 575.37 763.33 578.76 763.33 C582.15 763.33 583.85 761.57 587.24 760.83 C590.63 760.10 592.33 759.67 595.72 759.67 C599.11 759.67 600.81 759.67 604.20 759.67 C607.59 759.67 609.29 756.33 612.68 756.33 C616.07 756.33 617.77 757.43 621.16 758.33 C624.55 759.23 626.25 760.83 629.64 760.83 C633.03 760.83 634.73 760.83 638.12 760.83 C641.51 760.83 643.21 750.00 646.60 750.00 C649.99 750.00 651.69 755.33 655.08 755.33 C658.47 755.33 660.17 753.38 663.56 752.44 C666.95 751.51 668.65 750.67 672.04 750.67 C675.43 750.67 677.13 751.56 680.52 751.56 C683.91 751.56 685.61 745.87 689.00 745.87 C692.39 745.87 694.09 756.89 697.48 756.89 C700.87 756.89 702.57 738.22 705.96 738.22 C709.35 738.22 711.05 749.78 714.44 750.67 C717.83 751.56 719.53 751.20 722.92 751.56 C726.31 751.91 728.01 752.44 731.40 752.44 C734.79 752.44 736.49 749.42 739.88 749.42 C743.27 749.42 744.97 752.02 748.36 754.22 C751.75 756.43 753.45 760.44 756.84 760.44 C760.23 760.44 761.93 748.89 765.32 748.89 C768.71 748.89 770.41 751.56 773.80 751.56 C777.19 751.56 778.89 751.56 782.28 751.22 C785.67 750.89 787.37 748.14 790.76 748.14 C794.15 748.14 795.85 751.02 799.24 752.25 C802.63 753.48 804.33 754.31 807.72 754.31 C811.11 754.31 812.81 754.31 816.20 754.31 C819.59 754.31 821.29 748.14 824.68 748.14 C828.07 748.14 829.77 748.14 833.16 748.14 C836.55 748.14 838.25 748.14 841.64 747.52 C845.03 746.91 846.73 733.13 850.12 733.13 C853.51 733.13 855.21 737.94 858.60 740.94 C861.99 743.95 863.69 746.08 867.08 748.14 C870.47 750.19 872.17 751.22 875.56 751.22 C878.95 751.22 880.65 744.03 884.04 744.03 C887.43 744.03 892.52 762.53 892.52 762.53" fill="none" stroke="#ea4335" stroke-width="2" stroke-linejoin="round" stroke-linecap="round"/>
<path d="M137.80 754.00 C137.80 754.00 142.89 753.60 146.28 753.60 C149.67 753.60 151.37 759.20 154.76 759.73 C158.15 760.27 159.85 760.27 163.24 760.27 C166.63 760.27 168.33 759.71 171.72 758.00 C175.11 756.29 176.81 751.73 180.20 751.73 C183.59 751.73 185.29 756.00 188.68 756.00 C192.07 756.00 193.77 756.00 197.16 753.33 C200.55 750.67 202.25 730.40 205.64 730.40 C209.03 730.40 210.73 746.00 214.12 750.00 C217.51 754.00 219.21 754.00 222.60 754.00 C225.99 754.00 227.69 752.93 231.08 751.33 C234.47 749.73 236.17 746.00 239.56 746.00 C242.95 746.00 244.65 748.13 248.04 749.33 C251.43 750.53 253.13 752.00 256.52 752.00 C259.91 752.00 261.61 748.67 265.00 748.67 C268.39 748.67 270.09 754.67 273.48 754.67 C276.87 754.67 278.57 753.33 281.96 753.33 C285.35 753.33 287.05 754.17 290.44 754.17 C293.83 754.17 295.53 745.83 298.92 745.83 C302.31 745.83 304.01 748.33 307.40 748.33 C310.79 748.33 312.49 748.33 315.88 748.33 C319.27 748.33 320.97 733.00 324.36 733.00 C327.75 733.00 329.45 741.60 332.84 745.00 C336.23 748.40 337.93 750.00 341.32 750.00 C344.71 750.00 346.41 737.17 349.80 737.17 C353.19 737.17 354.89 739.10 358.28 740.00 C361.67 740.90 363.37 740.00 366.76 741.67 C370.15 743.33 371.85 748.33 375.24 748.33 C378.63 748.33 380.33 745.00 383.72 745.00 C387.11 745.00 388.81 750.33 392.20 752.50 C395.59 754.67 397.29 755.83 400.68 755.83 C404.07 755.83 405.77 755.07 409.16 754.17 C412.55 753.27 414.25 752.67 417.64 751.33 C421.03 750.00 422.73 751.33 426.12 747.50 C429.51 743.67 431.21 715.33 434.60 715.33 C437.99 715.33 439.69 726.73 443.08 732.50 C446.47 738.27 448.17 744.17 451.56 744.17 C454.95 744.17 456.65 744.17 460.04 742.50 C463.43 740.83 465.13 733.67 468.52 733.67 C471.91 733.67 473.61 735.73 477.00 738.33 C480.39 740.93 482.09 746.67 485.48 746.67 C488.87 746.67 490.57 742.33 493.96 740.83 C497.35 739.33 499.05 739.17 502.44 739.17 C505.83 739.17 507.53 751.33 510.92 751.33 C514.31 751.33 516.01 750.20 519.40 749.67 C522.79 749.13 524.49 749.50 527.88 748.67 C531.27 747.83 532.97 746.30 536.36 745.50 C539.75 744.70 541.45 744.67 544.84 744.67 C548.23 744.67 549.93 745.00 553.32 745.00 C556.71 745.00 558.41 743.33 561.80 743.33 C565.19 743.33 566.89 748.33 570.28 750.83 C573.67 753.33 575.37 755.83 578.76 755.83 C582.15 755.83 583.85 746.67 587.24 746.67 C590.63 746.67 592.33 749.67 595.72 749.67 C599.11 749.67 600.81 747.00 604.20 745.33 C607.59 743.67 609.29 741.33 612.68 741.33 C616.07 741.33 617.77 741.33 621.16 742.00 C624.55 742.67 626.25 751.67 629.64 751.67 C633.03 751.67 634.73 751.67 638.12 750.33 C641.51 749.00 643.21 726.67 646.60 726.67 C649.99 726.67 651.69 741.33 655.08 741.33 C658.47 741.33 660.17 737.60 663.56 735.56 C666.95 733.51 668.65 731.11 672.04 731.11 C675.43 731.11 677.13 733.78 680.52 733.78 C683.91 733.78 685.61 723.11 689.00 723.11 C692.39 723.11 694.09 745.33 697.48 745.33 C700.87 745.33 702.57 708.36 705.96 708.36 C709.35 708.36 711.05 719.98 714.44 724.89 C717.83 729.80 719.53 730.76 722.92 732.89 C726.31 735.02 728.01 735.56 731.40 735.56 C734.79 735.56 736.49 728.44 739.88 728.44 C743.27 728.44 744.97 732.82 748.36 736.44 C751.75 740.07 753.45 746.58 756.84 746.58 C760.23 746.58 761.93 727.91 765.32 727.91 C768.71 727.91 770.41 732.89 773.80 732.89 C777.19 732.89 778.89 732.89 782.28 732.72 C785.67 732.56 787.37 730.67 790.76 730.67 C794.15 730.67 795.85 730.67 799.24 731.69 C802.63 732.72 804.33 742.18 807.72 742.59 C811.11 743.00 812.81 743.00 816.20 743.00 C819.59 743.00 821.29 735.39 824.68 732.72 C828.07 730.05 829.77 730.87 833.16 729.64 C836.55 728.41 838.25 729.64 841.64 726.56 C845.03 723.47 846.73 701.48 850.12 701.48 C853.51 701.48 855.21 706.95 858.60 711.14 C861.99 715.33 863.69 718.74 867.08 722.44 C870.47 726.14 872.17 729.64 875.56 729.64 C878.95 729.64 880.65 718.95 884.04 718.95 C887.43 718.95 892.52 753.28 892.52 753.28" fill="none" stroke="#249f48" stroke-width="2" stroke-linejoin="round" stroke-linecap="round"/>
<path d="M137.80 748.00 C137.80 748.00 142.89 746.67 146.28 746.67 C149.67 746.67 151.37 751.92 154.76 754.00 C158.15 756.08 159.85 757.07 163.24 757.07 C166.63 757.07 168.33 753.28 171.72 751.33 C175.11 749.39 176.81 747.33 180.20 747.33 C183.59 747.33 185.29 751.33 188.68 751.33 C192.07 751.33 193.77 751.33 197.16 749.07 C200.55 746.80 202.25 715.73 205.64 715.73 C209.03 715.73 210.73 742.00 214.12 745.33 C217.51 748.67 219.21 748.67 222.60 748.67 C225.99 748.67 227.69 743.07 231.08 740.67 C234.47 738.27 236.17 736.67 239.56 736.67 C242.95 736.67 244.65 741.60 248.04 743.33 C251.43 745.07 253.13 745.33 256.52 745.33 C259.91 745.33 261.61 740.67 265.00 740.67 C268.39 740.67 270.09 747.33 273.48 747.33 C276.87 747.33 278.57 746.30 281.96 745.83 C285.35 745.37 287.05 745.83 290.44 745.00 C293.83 744.17 295.53 741.33 298.92 741.33 C302.31 741.33 304.01 741.33 307.40 741.67 C310.79 742.00 312.49 743.33 315.88 743.33 C319.27 743.33 320.97 718.33 324.36 718.33 C327.75 718.33 329.45 733.00 332.84 738.33 C336.23 743.67 337.93 745.00 341.32 745.00 C344.71 745.00 346.41 725.50 349.80 725.50 C353.19 725.50 354.89 729.93 358.28 731.67 C361.67 733.40 363.37 733.17 366.76 734.17 C370.15 735.17 371.85 736.67 375.24 736.67 C378.63 736.67 380.33 735.33 383.72 735.33 C387.11 735.33 388.81 740.33 392.20 743.33 C395.59 746.33 397.29 750.33 400.68 750.33 C404.07 750.33 405.77 747.90 409.16 746.67 C412.55 745.43 414.25 745.50 417.64 744.17 C421.03 742.83 422.73 744.17 426.12 740.00 C429.51 735.83 431.21 697.50 434.60 697.50 C437.99 697.50 439.69 713.17 443.08 720.83 C446.47 728.50 448.17 735.83 451.56 735.83 C454.95 735.83 456.65 734.90 460.04 732.50 C463.43 730.10 465.13 723.83 468.52 723.83 C471.91 723.83 473.61 725.60 477.00 728.33 C480.39 731.07 482.09 737.50 485.48 737.50 C488.87 737.50 490.57 727.00 493.96 726.67 C497.35 726.33 499.05 726.33 502.44 726.33 C505.83 726.33 507.53 743.83 510.92 743.83 C514.31 743.83 516.01 743.83 519.40 743.33 C522.79 742.83 524.49 737.50 527.88 736.67 C531.27 735.83 532.97 736.17 536.36 735.83 C539.75 735.50 541.45 735.33 544.84 735.00 C548.23 734.67 549.93 734.90 553.32 734.17 C556.71 733.43 558.41 731.33 561.80 731.33 C565.19 731.33 566.89 738.83 570.28 742.50 C573.67 746.17 575.37 749.67 578.76 749.67 C582.15 749.67 583.85 740.00 587.24 740.00 C590.63 740.00 592.33 740.00 595.72 740.00 C599.11 740.00 600.81 738.00 604.20 735.83 C607.59 733.67 609.29 729.17 612.68 729.17 C616.07 729.17 617.77 729.17 621.16 730.00 C624.55 730.83 626.25 742.50 629.64 743.33 C633.03 744.17 634.73 744.17 638.12 744.17 C641.51 744.17 643.21 709.17 646.60 709.17 C649.99 709.17 651.69 729.67 655.08 729.67 C658.47 729.67 660.17 727.34 663.56 724.89 C666.95 722.44 668.65 717.42 672.04 717.42 C675.43 717.42 677.13 721.33 680.52 721.33 C683.91 721.33 685.61 703.91 689.00 703.91 C692.39 703.91 694.09 735.56 697.48 735.56 C700.87 735.56 702.57 691.11 705.96 691.11 C709.35 691.11 711.05 705.51 714.44 710.67 C717.83 715.82 719.53 715.29 722.92 716.89 C726.31 718.49 728.01 718.67 731.40 718.67 C734.79 718.67 736.49 710.67 739.88 710.67 C743.27 710.67 744.97 717.78 748.36 723.11 C751.75 728.44 753.45 737.33 756.84 737.33 C760.23 737.33 761.93 713.33 765.32 713.33 C768.71 713.33 770.41 717.73 773.80 719.56 C777.19 721.38 778.89 722.44 782.28 722.44 C785.67 722.44 787.37 716.28 790.76 716.28 C794.15 716.28 795.85 716.28 799.24 716.28 C802.63 716.28 804.33 731.69 807.72 731.69 C811.11 731.69 812.81 731.69 816.20 730.67 C819.59 729.64 821.29 722.44 824.68 720.39 C828.07 718.33 829.77 719.98 833.16 718.33 C836.55 716.69 838.25 718.33 841.64 712.17 C845.03 706.00 846.73 675.17 850.12 675.17 C853.51 675.17 855.21 687.29 858.60 693.67 C861.99 700.04 863.69 703.33 867.08 707.03 C870.47 710.73 872.17 712.17 875.56 712.17 C878.95 712.17 880.65 695.72 884.04 695.72 C887.43 695.72 892.52 747.11 892.52 747.11" fill="none" stroke="#fbb907" stroke-width="2" stroke-linejoin="round" stroke-linecap="round"/>
<path d="M137.80 739.73 C137.80 739.73 142.89 736.67 146.28 736.67 C149.67 736.67 151.37 743.47 154.76 746.67 C158.15 749.87 159.85 752.67 163.24 752.67 C166.63 752.67 168.33 746.35 171.72 743.33 C175.11 740.32 176.81 737.60 180.20 737.60 C183.59 737.60 185.29 742.67 188.68 742.67 C192.07 742.67 193.77 742.67 197.16 741.33 C200.55 740.00 202.25 700.00 205.64 700.00 C209.03 700.00 210.73 737.33 214.12 738.67 C217.51 740.00 219.21 740.00 222.60 740.00 C225.99 740.00 227.69 733.41 231.08 730.67 C234.47 727.92 236.17 726.27 239.56 726.27 C242.95 726.27 244.65 731.92 248.04 734.00 C251.43 736.08 253.13 736.67 256.52 736.67 C259.91 736.67 261.61 730.67 265.00 730.67 C268.39 730.67 270.09 738.67 273.48 738.67 C276.87 738.67 278.57 738.40 281.96 737.50 C285.35 736.60 287.05 735.50 290.44 734.17 C293.83 732.83 295.53 730.83 298.92 730.83 C302.31 730.83 304.01 733.17 307.40 733.67 C310.79 734.17 312.49 734.17 315.88 734.17 C319.27 734.17 320.97 701.33 324.36 701.33 C327.75 701.33 329.45 722.50 332.84 728.33 C336.23 734.17 337.93 734.17 341.32 734.17 C344.71 734.17 346.41 708.67 349.80 708.67 C353.19 708.67 354.89 718.33 358.28 720.83 C361.67 723.33 363.37 722.50 366.76 723.33 C370.15 724.17 371.85 725.00 375.24 725.00 C378.63 725.00 380.33 722.50 383.72 722.50 C387.11 722.50 388.81 729.50 392.20 733.33 C395.59 737.17 397.29 741.67 400.68 741.67 C404.07 741.67 405.77 732.50 409.16 732.50 C412.55 732.50 414.25 732.50 417.64 732.50 C421.03 732.50 422.73 732.50 426.12 728.33 C429.51 724.17 431.21 672.50 434.60 672.50 C437.99 672.50 439.69 693.00 443.08 703.33 C446.47 713.67 448.17 724.17 451.56 724.17 C454.95 724.17 456.65 724.17 460.04 720.83 C463.43 717.50 465.13 707.00 468.52 707.00 C471.91 707.00 473.61 710.50 477.00 714.17 C480.39 717.83 482.09 725.33 485.48 725.33 C488.87 725.33 490.57 713.33 493.96 713.33 C497.35 713.33 499.05 713.33 502.44 713.33 C505.83 713.33 507.53 734.67 510.92 734.67 C514.31 734.67 516.01 734.67 519.40 734.67 C522.79 734.67 524.49 722.17 527.88 722.17 C531.27 722.17 532.97 723.33 536.36 723.33 C539.75 723.33 541.45 721.67 544.84 721.67 C548.23 721.67 549.93 724.17 553.32 724.17 C556.71 724.17 558.41 716.67 561.80 716.67 C565.19 716.67 566.89 726.93 570.28 731.67 C573.67 736.40 575.37 740.33 578.76 740.33 C582.15 740.33 583.85 728.00 587.24 728.00 C590.63 728.00 592.33 728.33 595.72 728.33 C599.11 728.33 600.81 727.50 604.20 724.17 C607.59 720.83 609.29 711.67 612.68 711.67 C616.07 711.67 617.77 711.67 621.16 714.17 C624.55 716.67 626.25 731.67 629.64 733.33 C633.03 735.00 634.73 735.00 638.12 735.00 C641.51 735.00 643.21 692.50 646.60 692.50 C649.99 692.50 651.69 712.50 655.08 712.50 C658.47 712.50 660.17 712.10 663.56 708.89 C666.95 705.68 668.65 696.44 672.04 696.44 C675.43 696.44 677.13 706.22 680.52 706.22 C683.91 706.22 685.61 683.11 689.00 683.11 C692.39 683.11 694.09 717.78 697.48 717.78 C700.87 717.78 702.57 662.13 705.96 662.13 C709.35 662.13 711.05 682.83 714.44 690.22 C717.83 697.62 719.53 698.76 722.92 699.11 C726.31 699.47 728.01 699.47 731.40 699.47 C734.79 699.47 736.49 693.78 739.88 693.78 C743.27 693.78 744.97 702.74 748.36 708.89 C751.75 715.04 753.45 724.53 756.84 724.53 C760.23 724.53 761.93 697.69 765.32 697.69 C768.71 697.69 770.41 702.67 773.80 702.67 C777.19 702.67 778.89 700.81 782.28 699.83 C785.67 698.86 787.37 698.72 790.76 697.78 C794.15 696.83 795.85 695.11 799.24 695.11 C802.63 695.11 804.33 715.25 807.72 715.25 C811.11 715.25 812.81 715.25 816.20 715.25 C819.59 715.25 821.29 700.86 824.68 699.83 C828.07 698.81 829.77 699.83 833.16 698.81 C836.55 697.78 838.25 696.75 841.64 685.44 C845.03 674.14 846.73 642.28 850.12 642.28 C853.51 642.28 855.21 657.69 858.60 665.92 C861.99 674.14 863.69 677.84 867.08 683.39 C870.47 688.94 872.17 693.67 875.56 693.67 C878.95 693.67 880.65 665.92 884.04 665.92 C887.43 665.92 892.52 736.83 892.52 736.83" fill="none" stroke="#fb7214" stroke-width="2" stroke-linejoin="round" stroke-linecap="round"/>
<path d="M137.80 732.67 C137.80 732.67 142.89 725.07 146.28 725.07 C149.67 725.07 151.37 736.88 154.76 741.33 C158.15 745.79 159.85 747.33 163.24 747.33 C166.63 747.33 168.33 741.20 171.72 737.33 C175.11 733.47 176.81 728.00 180.20 728.00 C183.59 728.00 185.29 733.73 188.68 733.73 C192.07 733.73 193.77 733.73 197.16 733.07 C200.55 732.40 202.25 683.73 205.64 683.73 C209.03 683.73 210.73 726.67 214.12 728.67 C217.51 730.67 219.21 730.67 222.60 730.67 C225.99 730.67 227.69 723.20 231.08 720.00 C234.47 716.80 236.17 714.67 239.56 714.67 C242.95 714.67 244.65 724.00 248.04 724.00 C251.43 724.00 253.13 722.13 256.52 720.67 C259.91 719.20 261.61 716.67 265.00 716.67 C268.39 716.67 270.09 728.67 273.48 728.67 C276.87 728.67 278.57 728.67 281.96 728.33 C285.35 728.00 287.05 724.40 290.44 722.50 C293.83 720.60 295.53 718.83 298.92 718.83 C302.31 718.83 304.01 724.33 307.40 724.67 C310.79 725.00 312.49 725.00 315.88 725.00 C319.27 725.00 320.97 678.33 324.36 678.33 C327.75 678.33 329.45 711.17 332.84 717.50 C336.23 723.83 337.93 723.83 341.32 723.83 C344.71 723.83 346.41 684.50 349.80 684.50 C353.19 684.50 354.89 703.00 358.28 706.67 C361.67 710.33 363.37 709.17 366.76 710.33 C370.15 711.50 371.85 712.50 375.24 712.50 C378.63 712.50 380.33 705.00 383.72 705.00 C387.11 705.00 388.81 716.10 392.20 721.67 C395.59 727.23 397.29 732.83 400.68 732.83 C404.07 732.83 405.77 723.67 409.16 720.83 C412.55 718.00 414.25 719.50 417.64 718.00 C421.03 716.50 422.73 718.00 426.12 713.33 C429.51 708.67 431.21 642.83 434.60 642.83 C437.99 642.83 439.69 663.90 443.08 678.33 C446.47 692.77 448.17 715.00 451.56 715.00 C454.95 715.00 456.65 715.00 460.04 712.50 C463.43 710.00 465.13 690.00 468.52 690.00 C471.91 690.00 473.61 694.73 477.00 698.33 C480.39 701.93 482.09 708.00 485.48 708.00 C488.87 708.00 490.57 697.17 493.96 697.17 C497.35 697.17 499.05 697.17 502.44 697.50 C505.83 697.83 507.53 723.33 510.92 723.33 C514.31 723.33 516.01 723.33 519.40 722.83 C522.79 722.33 524.49 708.33 527.88 708.33 C531.27 708.33 532.97 712.50 536.36 712.50 C539.75 712.50 541.45 711.17 544.84 711.17 C548.23 711.17 549.93 712.83 553.32 712.83 C556.71 712.83 558.41 703.33 561.80 703.33 C565.19 703.33 566.89 714.90 570.28 720.83 C573.67 726.77 575.37 733.00 578.76 733.00 C582.15 733.00 583.85 718.67 587.24 716.67 C590.63 714.67 592.33 715.67 595.72 714.67 C599.11 713.67 600.81 714.67 604.20 711.67 C607.59 708.67 609.29 698.00 612.68 698.00 C616.07 698.00 617.77 698.00 621.16 701.67 C624.55 705.33 626.25 721.50 629.64 722.00 C633.03 722.50 634.73 722.50 638.12 722.50 C641.51 722.50 643.21 669.50 646.60 669.50 C649.99 669.50 651.69 698.33 655.08 698.33 C658.47 698.33 660.17 696.47 663.56 692.89 C666.95 689.31 668.65 680.44 672.04 680.44 C675.43 680.44 677.13 685.78 680.52 685.78 C683.91 685.78 685.61 662.13 689.00 662.13 C692.39 662.13 694.09 704.44 697.48 704.44 C700.87 704.44 702.57 635.11 705.96 635.11 C709.35 635.11 711.05 657.51 714.44 665.33 C717.83 673.16 719.53 673.33 722.92 674.22 C726.31 675.11 728.01 675.11 731.40 675.11 C734.79 675.11 736.49 670.31 739.88 670.31 C743.27 670.31 744.97 682.68 748.36 691.11 C751.75 699.54 753.45 712.44 756.84 712.44 C760.23 712.44 761.93 675.47 765.32 675.47 C768.71 675.47 770.41 684.36 773.80 684.36 C777.19 684.36 778.89 681.33 782.28 681.33 C785.67 681.33 787.37 681.33 790.76 681.33 C794.15 681.33 795.85 674.14 799.24 674.14 C802.63 674.14 804.33 702.92 807.72 702.92 C811.11 702.92 812.81 702.92 816.20 702.92 C819.59 702.92 821.29 682.36 824.68 681.33 C828.07 680.31 829.77 681.33 833.16 680.31 C836.55 679.28 838.25 680.31 841.64 672.08 C845.03 663.86 846.73 606.72 850.12 606.72 C853.51 606.72 855.21 630.64 858.60 642.28 C861.99 653.91 863.69 658.52 867.08 664.89 C870.47 671.26 872.17 674.14 875.56 674.14 C878.95 674.14 880.65 636.11 884.04 636.11 C887.43 636.11 892.52 726.56 892.52 726.56" fill="none" stroke="#7325c8" stroke-width="2" stroke-linejoin="round" stroke-linecap="round"/>
  <!-- area legend swatches -->
  <g>
    <rect x="150.4" y="821.2" width="15" height="4.6" fill="#aac5fb"/><rect x="150.4" y="819.2" width="15" height="2.2" fill="#4285f4"/>
    <rect x="256.4" y="821.2" width="15" height="4.6" fill="#f7b5ad"/><rect x="256.4" y="819.2" width="15" height="2.2" fill="#ea4335"/>
    <rect x="392.2" y="821.2" width="15" height="4.6" fill="#a6d9b5"/><rect x="392.2" y="819.2" width="15" height="2.2" fill="#249f48"/>
    <rect x="599.7" y="821.2" width="15" height="4.6" fill="#fde396"/><rect x="599.7" y="819.2" width="15" height="2.2" fill="#fbb907"/>
    <rect x="671.4" y="821.2" width="15" height="4.6" fill="#fdc4a2"/><rect x="671.4" y="819.2" width="15" height="2.2" fill="#fb7214"/>
    <rect x="747.7" y="821.2" width="15" height="4.6" fill="#c6a5eb"/><rect x="747.7" y="819.2" width="15" height="2.2" fill="#7325c8"/>
  </g>

  <!-- line chart -->
  <path d="M1015 777.5 H1256" stroke="#ccd6eb" stroke-width="1"/>
  <path d="M1025.00 742.00 C1025.00 742.00 1037.05 743.00 1045.09 744.40 C1053.13 745.80 1057.15 749.00 1065.18 749.00 C1073.22 749.00 1077.24 743.80 1085.27 740.80 C1093.31 737.80 1097.33 734.00 1105.36 734.00 C1113.40 734.00 1117.42 734.70 1125.45 734.70 C1133.49 734.70 1137.51 733.70 1145.55 733.70 C1153.58 733.70 1157.60 736.50 1165.64 736.50 C1173.67 736.50 1177.69 731.30 1185.73 728.60 C1193.76 725.90 1197.78 723.00 1205.82 723.00 C1213.85 723.00 1217.87 731.40 1225.91 731.40 C1233.95 731.40 1246.00 720.70 1246.00 720.70" fill="none" stroke="#fbb907" stroke-width="2" stroke-linejoin="round" stroke-linecap="round"/>
<path d="M1025.00 700.00 C1025.00 700.00 1037.05 730.00 1045.09 730.00 C1053.13 730.00 1057.15 730.00 1065.18 728.60 C1073.22 727.20 1077.24 715.02 1085.27 709.40 C1093.31 703.78 1097.33 702.78 1105.36 700.50 C1113.40 698.22 1117.42 698.00 1125.45 698.00 C1133.49 698.00 1137.51 698.00 1145.55 698.00 C1153.58 698.00 1157.60 709.00 1165.64 709.00 C1173.67 709.00 1177.69 705.00 1185.73 700.00 C1193.76 695.00 1197.78 684.00 1205.82 684.00 C1213.85 684.00 1217.87 691.00 1225.91 691.00 C1233.95 691.00 1246.00 678.80 1246.00 678.80" fill="none" stroke="#249f48" stroke-width="2" stroke-linejoin="round" stroke-linecap="round"/>
<path d="M1025.00 675.70 C1025.00 675.70 1037.05 655.80 1045.09 655.80 C1053.13 655.80 1057.15 686.40 1065.18 686.40 C1073.22 686.40 1077.24 661.96 1085.27 652.00 C1093.31 642.04 1097.33 637.20 1105.36 636.60 C1113.40 636.00 1117.42 636.60 1125.45 636.00 C1133.49 635.40 1137.51 621.80 1145.55 621.80 C1153.58 621.80 1157.60 649.40 1165.64 649.40 C1173.67 649.40 1177.69 620.60 1185.73 611.00 C1193.76 601.40 1197.78 601.40 1205.82 601.40 C1213.85 601.40 1217.87 613.00 1225.91 613.00 C1233.95 613.00 1246.00 570.20 1246.00 570.20" fill="none" stroke="#4285f4" stroke-width="2" stroke-linejoin="round" stroke-linecap="round"/>
<path d="M1025.00 534.70 C1025.00 534.70 1037.05 590.10 1045.09 590.10 C1053.13 590.10 1057.15 590.10 1065.18 579.00 C1073.22 567.90 1077.24 506.20 1085.27 470.40 C1093.31 434.60 1105.36 400.00 1105.36 400.00" fill="none" stroke="#ea4335" stroke-width="2" stroke-linejoin="round" stroke-linecap="round"/>
  <g stroke-width="2" stroke-linecap="round">
    <path d="M1277 588 H1291" stroke="#ea4335"/>
    <path d="M1277 607 H1291" stroke="#4285f4"/>
    <path d="M1277 626 H1291" stroke="#249f48"/>
    <path d="M1277 645 H1291" stroke="#fbb907"/>
  </g>

  <!-- scrollbar -->
  <rect x="1387" y="231" width="11" height="669" fill="#f9f9f9"/>
  <path d="M1386.5 231 V900" stroke="#e3e5e8" stroke-width="1"/>
  <rect x="1389" y="233" width="14" height="215" rx="5.5" fill="#717274"/>
  <!-- cursor -->
  <path d="M1391.3 278.6 L1391.3 295.6 L1395 292.2 L1397.4 297.6 L1399.6 296.6 L1397.2 291.4 L1402 291 Z" fill="#111" stroke="#fff" stroke-width="0.8"/>
</svg>

<span class="t" style="left:82.20px;top:19.43px;font-size:24.3px;line-height:24.3px;color:#5a5f66;transform:scaleX(0.9475);">Looker</span>
<span class="t" style="left:449.00px;top:23.86px;font-size:16px;line-height:16px;color:#5f6368;transform:scaleX(1.0054);-webkit-text-stroke:0.25px #5f6368;">Start typing to search</span>
<span class="t" style="left:58.30px;top:84.52px;font-size:12.5px;line-height:12.5px;color:#5f6368;transform:scaleX(0.9559);-webkit-text-stroke:0.2px #5f6368;">Sam Scislowicz</span>
<span class="t" style="left:58.30px;top:106.11px;font-size:23.5px;line-height:23.5px;color:#23282e;transform:scaleX(0.9740);-webkit-text-stroke:0.22px #23282e;">Business Pulse</span>
<span class="t" style="left:58.00px;top:155.04px;font-size:12px;line-height:12px;color:#343a40;-webkit-text-stroke:0.2px #343a40;">Traffic Source</span>
<span class="t" style="left:180.00px;top:155.04px;font-size:12px;line-height:12px;color:#343a40;transform:scaleX(0.9680);-webkit-text-stroke:0.2px #343a40;">User Gender</span>
<span class="t" style="left:329.00px;top:155.04px;font-size:12px;line-height:12px;color:#343a40;transform:scaleX(0.9665);-webkit-text-stroke:0.2px #343a40;">Date</span>
<span class="t" style="left:459.00px;top:155.04px;font-size:12px;line-height:12px;color:#343a40;transform:scaleX(1.0249);-webkit-text-stroke:0.2px #343a40;">Location</span>
<span class="t" style="left:583.00px;top:155.04px;font-size:12px;line-height:12px;color:#343a40;transform:scaleX(0.9877);-webkit-text-stroke:0.2px #343a40;">Country</span>
<span class="t" style="left:705.00px;top:155.04px;font-size:12px;line-height:12px;color:#343a40;-webkit-text-stroke:0.2px #343a40;">State</span>
<span class="t" style="left:827.00px;top:155.04px;font-size:12px;line-height:12px;color:#343a40;transform:scaleX(0.9920);-webkit-text-stroke:0.2px #343a40;">City</span>
<span class="t" style="left:634.00px;top:263.96px;font-size:18px;line-height:18px;color:#23282e;transform:scaleX(1.0072);-webkit-text-stroke:0.22px #23282e;">Top Line Metrics</span>
<span class="t" style="left:567.75px;top:295.36px;font-size:16px;line-height:16px;color:#23282e;transform:scaleX(1.0149);-webkit-text-stroke:0.22px #23282e;">Are we headed in the right direction?</span>
<span class="t" style="left:598.25px;top:888.36px;font-size:18px;line-height:18px;color:#23282e;transform:scaleX(1.0222);-webkit-text-stroke:0.22px #23282e;">Customer Demographics</span>
<span class="t" style="left:128.40px;top:409.57px;font-size:42.8px;line-height:42.8px;color:#23282e;transform:scaleX(0.8962);-webkit-text-stroke:1.15px #23282e;">188</span>
<span class="t" style="left:88.00px;top:467.19px;font-size:16.2px;line-height:16.2px;color:#23282e;transform:scaleX(0.9812);-webkit-text-stroke:0.22px #23282e;">New Users Acquired</span>
<span class="t" style="left:93.00px;top:512.19px;font-size:16.2px;line-height:16.2px;color:#23282e;-webkit-text-stroke:0.22px #23282e;">2% of 10,000 Goal</span>
<span class="t" style="left:317.20px;top:409.57px;font-size:42.8px;line-height:42.8px;color:#23282e;transform:scaleX(0.9014);-webkit-text-stroke:1.15px #23282e;">$61.58</span>
<span class="t" style="left:286.75px;top:467.19px;font-size:16.2px;line-height:16.2px;color:#23282e;transform:scaleX(0.9685);-webkit-text-stroke:0.22px #23282e;">Average Order Sale Price</span>
<span class="t" style="left:535.65px;top:409.57px;font-size:42.8px;line-height:42.8px;color:#23282e;transform:scaleX(0.9517);-webkit-text-stroke:1.15px #23282e;">42.2%</span>
<span class="t" style="left:502.00px;top:467.19px;font-size:16.2px;line-height:16.2px;color:#23282e;transform:scaleX(0.9362);-webkit-text-stroke:0.22px #23282e;">Repeat Purchase R...</span>
<span class="t" style="left:743.75px;top:409.57px;font-size:42.8px;line-height:42.8px;color:#23282e;transform:scaleX(0.8546);-webkit-text-stroke:1.15px #23282e;">119,199</span>
<span class="t" style="left:750.00px;top:467.19px;font-size:16.2px;line-height:16.2px;color:#23282e;transform:scaleX(0.9566);-webkit-text-stroke:0.22px #23282e;">Orders This Year</span>
<span class="t" style="left:736.20px;top:518.23px;font-size:16.5px;line-height:16.5px;color:#5a9a27;transform:scaleX(0.7716);-webkit-text-stroke:0.35px #5a9a27;">1%</span>
<span class="t" style="left:759.00px;top:518.23px;font-size:16.5px;line-height:16.5px;color:#23282e;transform:scaleX(0.9168);-webkit-text-stroke:0.22px #23282e;">vs Same Period L...</span>
<span class="t" style="left:368.10px;top:566.46px;font-size:18px;line-height:18px;color:#23282e;transform:scaleX(1.0083);-webkit-text-stroke:0.22px #23282e;">Orders by Day and Category</span>
<span class="t" style="left:102.28px;top:654.14px;font-size:12px;line-height:12px;color:#262d33;-webkit-text-stroke:0.2px #262d33;">400</span>
<span class="t" style="left:102.28px;top:710.14px;font-size:12px;line-height:12px;color:#262d33;-webkit-text-stroke:0.2px #262d33;">200</span>
<span class="t" style="left:115.63px;top:766.14px;font-size:12px;line-height:12px;color:#262d33;-webkit-text-stroke:0.2px #262d33;">0</span>
<span class="t" style="left:224.66px;top:780.64px;font-size:12px;line-height:12px;color:#262d33;-webkit-text-stroke:0.2px #262d33;">Apr 7</span>
<span class="t" style="left:340.32px;top:780.64px;font-size:12px;line-height:12px;color:#262d33;-webkit-text-stroke:0.2px #262d33;">Apr 21</span>
<span class="t" style="left:460.66px;top:780.64px;font-size:12px;line-height:12px;color:#262d33;-webkit-text-stroke:0.2px #262d33;">May 5</span>
<span class="t" style="left:576.32px;top:780.64px;font-size:12px;line-height:12px;color:#262d33;-webkit-text-stroke:0.2px #262d33;">May 19</span>
<span class="t" style="left:699.82px;top:780.64px;font-size:12px;line-height:12px;color:#262d33;-webkit-text-stroke:0.2px #262d33;">Jun 2</span>
<span class="t" style="left:814.99px;top:780.64px;font-size:12px;line-height:12px;color:#262d33;-webkit-text-stroke:0.2px #262d33;">Jun 16</span>
<span class="t" style="left:171.40px;top:814.84px;font-size:12px;line-height:12px;color:#262d33;transform:scaleX(1.0048);-webkit-text-stroke:0.2px #262d33;">Accessories</span>
<span class="t" style="left:277.40px;top:814.84px;font-size:12px;line-height:12px;color:#262d33;transform:scaleX(0.9856);-webkit-text-stroke:0.2px #262d33;">Blazers &amp; Jackets</span>
<span class="t" style="left:413.20px;top:814.84px;font-size:12px;line-height:12px;color:#262d33;transform:scaleX(0.9955);-webkit-text-stroke:0.2px #262d33;">Fashion Hoodies &amp; Sweatshirts</span>
<span class="t" style="left:620.70px;top:814.84px;font-size:12px;line-height:12px;color:#262d33;transform:scaleX(0.9776);-webkit-text-stroke:0.2px #262d33;">Pants</span>
<span class="t" style="left:692.40px;top:814.84px;font-size:12px;line-height:12px;color:#262d33;transform:scaleX(0.9947);-webkit-text-stroke:0.2px #262d33;">Shorts</span>
<span class="t" style="left:768.00px;top:814.84px;font-size:12px;line-height:12px;color:#262d33;transform:scaleX(0.9895);-webkit-text-stroke:0.2px #262d33;">Sweaters</span>
<span class="t" style="left:1029.00px;top:358.06px;font-size:18px;line-height:18px;color:#23282e;transform:scaleX(0.9574);-webkit-text-stroke:0.22px #23282e;">Total Sales, Year over Year</span>
<span class="t" style="left:985.95px;top:771.34px;font-size:12px;line-height:12px;color:#262d33;-webkit-text-stroke:0.2px #262d33;">$0K</span>
<span class="t" style="left:972.60px;top:712.44px;font-size:12px;line-height:12px;color:#262d33;-webkit-text-stroke:0.2px #262d33;">$250K</span>
<span class="t" style="left:972.60px;top:653.54px;font-size:12px;line-height:12px;color:#262d33;-webkit-text-stroke:0.2px #262d33;">$500K</span>
<span class="t" style="left:972.60px;top:594.64px;font-size:12px;line-height:12px;color:#262d33;-webkit-text-stroke:0.2px #262d33;">$750K</span>
<span class="t" style="left:965.93px;top:535.74px;font-size:12px;line-height:12px;color:#262d33;-webkit-text-stroke:0.2px #262d33;">$1000K</span>
<span class="t" style="left:965.93px;top:476.84px;font-size:12px;line-height:12px;color:#262d33;-webkit-text-stroke:0.2px #262d33;">$1250K</span>
<span class="t" style="left:965.93px;top:417.94px;font-size:12px;line-height:12px;color:#262d33;-webkit-text-stroke:0.2px #262d33;">$1500K</span>
<span class="t" style="left:1297.00px;top:582.14px;font-size:12px;line-height:12px;color:#262d33;transform:scaleX(1.0114);-webkit-text-stroke:0.2px #262d33;">2025</span>
<span class="t" style="left:1297.00px;top:601.14px;font-size:12px;line-height:12px;color:#262d33;transform:scaleX(1.0114);-webkit-text-stroke:0.2px #262d33;">2024</span>
<span class="t" style="left:1297.00px;top:620.14px;font-size:12px;line-height:12px;color:#262d33;transform:scaleX(1.0114);-webkit-text-stroke:0.2px #262d33;">2023</span>
<span class="t" style="left:1297.00px;top:639.14px;font-size:12px;line-height:12px;color:#262d33;transform:scaleX(1.0114);-webkit-text-stroke:0.2px #262d33;">2022</span>
<span class="t" style="left:29.98px;top:682.50px;font-size:12px;line-height:12px;color:#262d33;-webkit-text-stroke:0.2px #262d33;transform-origin:50% 50%;transform:rotate(-90deg) scaleX(0.9840)">Number of Orders</span>
<span class="t" style="left:900.31px;top:581.00px;font-size:12px;line-height:12px;color:#262d33;-webkit-text-stroke:0.2px #262d33;transform-origin:50% 50%;transform:rotate(-90deg) scaleX(0.9835)">Total Sale Price</span>
<span class="t" style="left:981.31px;top:784.00px;font-size:12px;line-height:12px;color:#262d33;-webkit-text-stroke:0.2px #262d33;transform-origin:100% 50%;transform:rotate(-45deg)">January</span>
<span class="t" style="left:1030.84px;top:784.00px;font-size:12px;line-height:12px;color:#262d33;-webkit-text-stroke:0.2px #262d33;transform-origin:100% 50%;transform:rotate(-45deg)">March</span>
<span class="t" style="left:1081.69px;top:784.00px;font-size:12px;line-height:12px;color:#262d33;-webkit-text-stroke:0.2px #262d33;transform-origin:100% 50%;transform:rotate(-45deg)">May</span>
<span class="t" style="left:1123.21px;top:784.00px;font-size:12px;line-height:12px;color:#262d33;-webkit-text-stroke:0.2px #262d33;transform-origin:100% 50%;transform:rotate(-45deg)">July</span>
<span class="t" style="left:1126.03px;top:784.00px;font-size:12px;line-height:12px;color:#262d33;-webkit-text-stroke:0.2px #262d33;transform-origin:100% 50%;transform:rotate(-45deg)">September</span>
<span class="t" style="left:1169.55px;top:784.00px;font-size:12px;line-height:12px;color:#262d33;-webkit-text-stroke:0.2px #262d33;transform-origin:100% 50%;transform:rotate(-45deg)">November</span>

</div>
</body>
</html>
